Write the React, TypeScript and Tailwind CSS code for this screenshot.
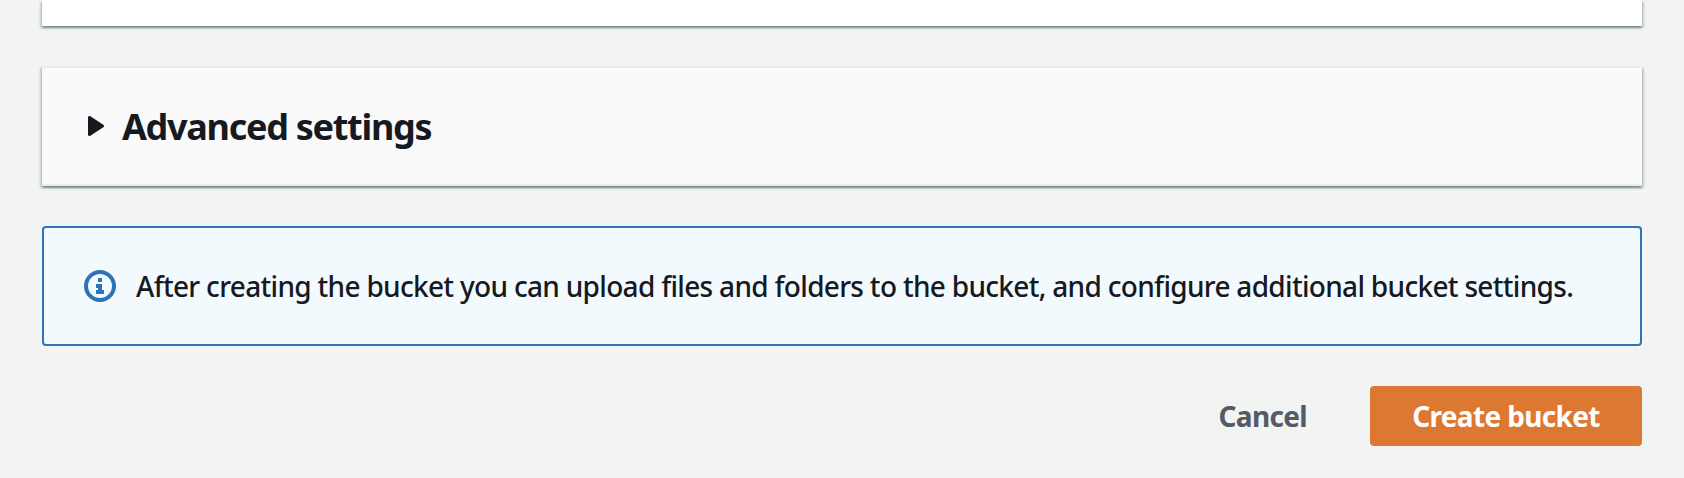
const cardShadow =
  "shadow-[0_2px_2px_0_rgba(0,28,36,0.3),2px_2px_2px_0_rgba(0,28,36,0.15),-2px_2px_2px_0_rgba(0,28,36,0.15)]";

function InfoIcon() {
  return (
    <svg width="32" height="32" viewBox="0 0 32 32" className="shrink-0 text-[#2e73b8]" aria-hidden="true">
      <circle cx="16" cy="16" r="14" fill="none" stroke="currentColor" strokeWidth="4" />
      <path d="M14 8h4v4h-4zM12 14h6v6h2v4h-8v-4h2v-2h-2z" fill="currentColor" />
    </svg>
  );
}

function AdvancedSettings() {
  return (
    <section className={`mt-10 flex h-[120px] items-center border-y-2 border-[#eaeded] bg-[#fafafa] pl-[46px] ${cardShadow}`}>
      <svg width="16" height="20" viewBox="0 0 16 20" className="shrink-0 text-[#16191f]" aria-hidden="true">
        <path d="M1.5 1.5v17l13-8.5z" fill="currentColor" stroke="currentColor" strokeWidth="3" strokeLinejoin="round" />
      </svg>
      <h2 className="ml-[18px] whitespace-nowrap pt-[2px] text-[36px] leading-[44px] font-bold tracking-[-1.29px] text-[#16191f]">
        Advanced settings
      </h2>
    </section>
  );
}

export default function App() {
  return (
    <main className="flex h-[478px] flex-col overflow-hidden bg-[#f2f3f3] px-[42px] font-['Noto_Sans',sans-serif]">
      <div className={`h-[26px] shrink-0 bg-white ${cardShadow}`} />
      <AdvancedSettings />
      <div className="mt-10 flex h-[120px] items-center rounded-[4px] border-2 border-[#2e73b8] bg-[#f2fafd] pl-10">
        <InfoIcon />
        <p className="ml-5 whitespace-nowrap pb-px text-[28px] leading-[44px] font-medium tracking-[-0.69px] text-[#16191f]">
          After creating the bucket you can upload files and folders to the bucket, and configure additional bucket settings.
        </p>
      </div>
      <div className="mt-10 flex h-[60px] items-center justify-end">
        <button className="mr-[63px] whitespace-nowrap pb-px text-[28px] leading-[40px] font-bold tracking-[-0.65px] text-[#545b64]">
          Cancel
        </button>
        <button className="flex h-[60px] w-[272px] items-center justify-center whitespace-nowrap rounded-[4px] bg-[#dd7832] pb-px text-[28px] leading-[40px] font-bold tracking-[-0.65px] text-white">
          Create bucket
        </button>
      </div>
    </main>
  );
}
